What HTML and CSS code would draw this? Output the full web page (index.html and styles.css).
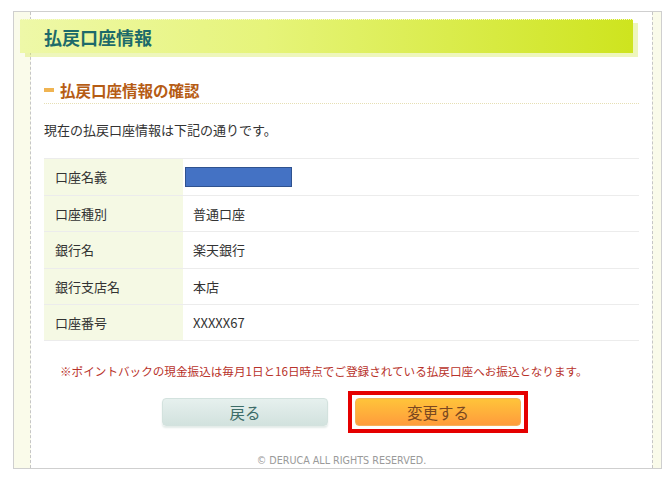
FILE: index.html
```html
<!DOCTYPE html>
<html lang="ja">
<head>
<meta charset="utf-8">
<title>払戻口座情報</title>
<link rel="stylesheet" href="styles.css">
</head>
<body>
<div class="frame">
  <div class="strip strip-l"></div>
  <div class="strip strip-r"></div>
  <h1 class="head">払戻口座情報</h1>
  <div class="main">
    <h2 class="subhead"><span class="mark"></span>払戻口座情報の確認</h2>
    <p class="lead">現在の払戻口座情報は下記の通りです。</p>
    <div class="table">
      <div class="row"><div class="label">口座名義</div><div class="value"><span class="masked"></span></div></div>
      <div class="row"><div class="label">口座種別</div><div class="value">普通口座</div></div>
      <div class="row"><div class="label">銀行名</div><div class="value">楽天銀行</div></div>
      <div class="row"><div class="label">銀行支店名</div><div class="value">本店</div></div>
      <div class="row last"><div class="label">口座番号</div><div class="value">XXXXX67</div></div>
    </div>
    <p class="note">※ポイントバックの現金振込は毎月1日と16日時点でご登録されている払戻口座へお振込となります。</p>
    <div class="buttons">
      <button class="btn btn-back">戻る</button>
      <span class="highlight"><button class="btn btn-change">変更する</button></span>
    </div>
    <p class="footer">© DERUCA ALL RIGHTS RESERVED.</p>
  </div>
</div>
</body>
</html>
```
FILE: styles.css
```css
* { box-sizing: border-box; }
body {
  margin: 0;
  background: #fff;
  font-family: "Noto Sans CJK JP", "Noto Sans", sans-serif;
  color: #333;
}
.frame {
  margin: 11px 0 0 13px;
  width: 649px;
  border: 1px solid #cfcfcf;
  display: grid;
  grid-template-columns: 17px 1fr 9px;
  grid-template-rows: auto auto;
}
.strip {
  grid-row: 1 / 3;
  background: #fafbea;
}
.strip-l {
  grid-column: 1;
  border-right: 1px dashed #c6c6c6;
}
.strip-r {
  grid-column: 3;
  border-left: 1px dashed #c6c6c6;
}
.head {
  grid-column: 1 / -1;
  grid-row: 1;
  z-index: 1;
  margin: 7px 28px 0 6px;
  height: 34px;
  padding-left: 24px;
  display: flex;
  align-items: center;
  font-size: 18px;
  font-weight: bold;
  color: #1d6a6a;
  background: linear-gradient(to right, #eef8a8 0%, #e6f47a 40%, #cee41e 100%);
  border-top: 1px dotted #f6fbd0;
  box-shadow: 5px 4px 0 rgba(205, 228, 60, 0.35);
}
.main {
  grid-column: 2;
  grid-row: 2;
  padding: 0 13px 1px 13px;
}
.subhead {
  margin: 27px 0 0 0;
  height: 24px;
  padding-bottom: 3px;
  line-height: 20px;
  font-size: 15.5px;
  font-weight: bold;
  color: #b65c14;
  display: flex;
  align-items: center;
  border-bottom: 1px dotted #e6dfb4;
}
.mark {
  width: 10px;
  height: 4px;
  background: #f0b452;
  margin-right: 6px;
}
.lead {
  margin: 16px 0 0 0;
  font-size: 13px;
  line-height: 20px;
}
.table {
  margin-top: 18px;
}
.row {
  display: grid;
  grid-template-columns: 139px 1fr;
  height: 36.6px;
  border-top: 1px solid #ececec;
  font-size: 13px;
}
.row.last { border-bottom: 1px solid #ececec; }
.label {
  background: #f5f9e4;
  padding-left: 11px;
  display: flex;
  align-items: center;
}
.value {
  padding-left: 10px;
  display: flex;
  align-items: center;
}
.masked {
  width: 107px;
  height: 20px;
  margin-left: -8px;
  background: #4472c4;
  border: 1px solid #2f528f;
}
.note {
  margin: 22px 0 0 0;
  padding-left: 16px;
  font-size: 11.6px;
  line-height: 16px;
  color: #b8322a;
}
.buttons {
  margin-top: 19px;
  display: flex;
  justify-content: center;
  align-items: center;
  gap: 27px;
}
.highlight {
  display: flex;
  margin: -7px;
  padding: 3px;
  border: 4px solid #e50000;
}
.btn {
  width: 166px;
  height: 28px;
  border-radius: 4px;
  font-family: inherit;
  font-size: 15.5px;
  padding: 0;
  cursor: pointer;
}
.btn-back {
  background: linear-gradient(#e6f0ee, #d2e2de);
  border: 1px solid #d3e2de;
  color: #3c6c68;
  box-shadow: 0 2px 2px #e3ebe8;
}
.btn-change {
  background: linear-gradient(#ffc43a, #ff9c3c);
  border: 1px solid #f5b25a;
  color: #7a4820;
}
.footer {
  margin: 29px 0 0 0;
  text-align: center;
  font-family: "DejaVu Sans", sans-serif;
  font-size: 9.6px;
  line-height: 12px;
  color: #9a9a9a;
}
```
